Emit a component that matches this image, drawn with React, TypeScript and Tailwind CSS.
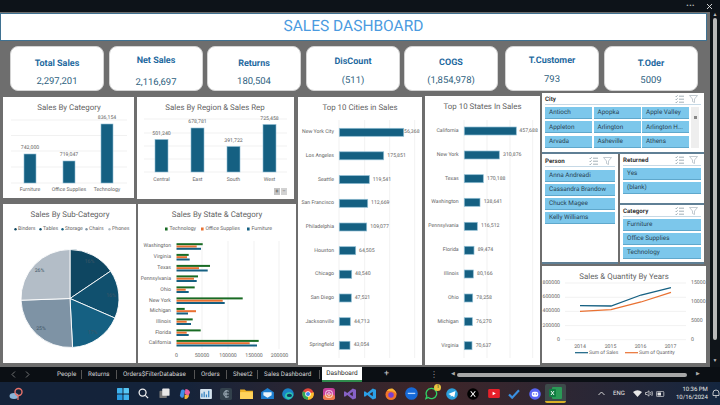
import React from "react";

const grid = "#eeeeee";
const bar = "#156082";
const barEdge = "#8fbdd3";

function Svg({ x, y, w, h, children }: { x: number; y: number; w: number; h: number; children: React.ReactNode }) {
  return (
    <svg className="block" width={w} height={h} viewBox={`${x} ${y} ${w} ${h}`}>
      {children}
    </svg>
  );
}

function T({ x, y, size = 5.2, anchor = "middle", fill = "#636363", children, weight }: { x: number; y: number; size?: number; anchor?: "start" | "middle" | "end"; fill?: string; children: React.ReactNode; weight?: number }) {
  return (
    <text x={x} y={y} fontSize={size} textAnchor={anchor} fill={fill} fontWeight={weight} dominantBaseline="central">
      {children}
    </text>
  );
}

function CategoryChart() {
  const bars = [
    { l: "Furniture", v: "742,000", x: 24, top: 154, vy: 148, lx: 30 },
    { l: "Office Supplies", v: "719,047", x: 63, top: 161, vy: 155, lx: 69 },
    { l: "Technology", v: "836,154", x: 101, top: 124, vy: 118, lx: 107 },
  ];
  return (
    <Svg x={3} y={97} w={131} h={101}>
      <T x={69} y={107} size={7.9}>Sales By Category</T>
      {[120, 135.5, 151, 167, 183].map((y) => (
        <line key={y} x1={11} x2={127} y1={y} y2={y} stroke={grid} strokeWidth={0.8} />
      ))}
      {bars.map((b) => (
        <g key={b.l}>
          <rect x={b.x} y={b.top} width={12} height={183 - b.top} fill={bar} stroke={barEdge} strokeWidth={0.6} />
          <T x={b.lx} y={b.vy}>{b.v}</T>
          <T x={b.lx} y={190}>{b.l}</T>
        </g>
      ))}
    </Svg>
  );
}

function RegionChart() {
  const bars = [
    { l: "Central", v: "501,240", x: 155, top: 139.5, vy: 133.5 },
    { l: "East", v: "678,781", x: 191, top: 128, vy: 122 },
    { l: "South", v: "391,722", x: 227, top: 146.5, vy: 140.5 },
    { l: "West", v: "725,458", x: 263, top: 124.5, vy: 118.5 },
  ];
  return (
    <Svg x={137} y={97} w={157} h={102}>
      <T x={215} y={107} size={7.9}>Sales By Region &amp; Sales Rep</T>
      {[119, 133, 146, 159, 172].map((y) => (
        <line key={y} x1={144} x2={287} y1={y} y2={y} stroke={grid} strokeWidth={0.8} />
      ))}
      {bars.map((b) => (
        <g key={b.l}>
          <rect x={b.x} y={b.top} width={13} height={172 - b.top} fill={bar} stroke={barEdge} strokeWidth={0.6} />
          <T x={b.x + 6.5} y={b.vy}>{b.v}</T>
          <T x={b.x + 6.5} y={179.5}>{b.l}</T>
        </g>
      ))}
      <rect x={274} y={188} width={6} height={7} fill="#c4c4c4" />
      <rect x={281} y={188} width={6} height={7} fill="#d2d2d2" />
      <T x={277} y={191.5} size={6} fill="#444">+</T>
      <T x={284} y={191.5} size={6} fill="#666">−</T>
    </Svg>
  );
}

function pt(cx: number, cy: number, r: number, deg: number) {
  const a = ((deg - 90) * Math.PI) / 180;
  return `${cx + r * Math.cos(a)} ${cy + r * Math.sin(a)}`;
}

function PieChart() {
  const cx = 70;
  const cy = 298.5;
  const r = 49;
  const sl = [
    { a: 0, b: 56, c: "#0e4661" },
    { a: 56, b: 113.5, c: "#10506e" },
    { a: 113.5, b: 177, c: "#156082" },
    { a: 177, b: 268, c: "#7e93a5" },
    { a: 268, b: 360, c: "#b3bdc7" },
  ];
  const legend = [
    { t: "Binders", x: 18, c: "#0e4661" },
    { t: "Tables", x: 43, c: "#10506e" },
    { t: "Storage", x: 65, c: "#156082" },
    { t: "Chairs", x: 89, c: "#7e93a5" },
    { t: "Phones", x: 112, c: "#b3bdc7" },
  ];
  const labels = [
    { t: "16%", x: 89.5, y: 262 },
    { t: "16%", x: 111, y: 296 },
    { t: "17%", x: 92.5, y: 332.5 },
    { t: "25%", x: 41, y: 328.5 },
    { t: "26%", x: 39.5, y: 271 },
  ];
  return (
    <Svg x={3} y={204} w={133} h={159}>
      <T x={70} y={214.5} size={7.9}>Sales By Sub-Category</T>
      {legend.map((l) => (
        <g key={l.t}>
          <circle cx={l.x - 2.5} cy={229.3} r={1.2} fill={l.c} />
          <T x={l.x} y={229} anchor="start">{l.t}</T>
        </g>
      ))}
      {sl.map((s) => (
        <path
          key={s.a}
          d={`M${cx} ${cy} L${pt(cx, cy, r, s.a)} A${r} ${r} 0 ${s.b - s.a > 180 ? 1 : 0} 1 ${pt(cx, cy, r, s.b)} Z`}
          fill={s.c}
          stroke="#ffffff"
          strokeWidth={0.9}
        />
      ))}
      {labels.map((l, i) => (
        <T key={i} x={l.x} y={l.y} fill="#3f5666">{l.t}</T>
      ))}
    </Svg>
  );
}

function StateChart() {
  const rows: [string, number, number, number, number][] = [
    ["Washington", 246.3, 202.7, 196.7, 201],
    ["Virginia", 257, 188.7, 187, 189.7],
    ["Texas", 268, 210, 199, 207.7],
    ["Pennsylvania", 278.5, 198, 194, 196.7],
    ["Ohio", 289.5, 194.7, 185.7, 188.7],
    ["New York", 300.5, 242.7, 222.7, 224.7],
    ["Michigan", 311, 184.7, 196, 188],
    ["Illinois", 321.5, 192.7, 186.7, 191],
    ["Florida", 332.5, 200.7, 186.7, 188.7],
    ["California", 343, 258.7, 249.7, 257],
  ];
  const x0 = 176.5;
  return (
    <Svg x={138} y={204} w={158} h={159}>
      <T x={217} y={214.5} size={7.9}>Sales By State &amp; Category</T>
      {[
        { t: "Technology", x: 165, c: "#196b24" },
        { t: "Office Supplies", x: 201, c: "#e97132" },
        { t: "Furniture", x: 247, c: "#156082" },
      ].map((l) => (
        <g key={l.t}>
          <rect x={l.x} y={227.5} width={2.6} height={3} fill={l.c} />
          <T x={l.x + 4.5} y={229} anchor="start">{l.t}</T>
        </g>
      ))}
      {[202, 228, 254, 279].map((x) => (
        <line key={x} x1={x} x2={x} y1={241} y2={349} stroke={grid} strokeWidth={0.8} />
      ))}
      {rows.map(([n, y, a, b, c]) => (
        <g key={n}>
          <T x={171} y={y} anchor="end">{n}</T>
          <rect x={x0} y={y - 3.1} width={a - x0} height={2} fill="#196b24" />
          <rect x={x0} y={y - 0.8} width={b - x0} height={2} fill="#e97132" />
          <rect x={x0} y={y + 1.5} width={c - x0} height={2} fill="#156082" />
        </g>
      ))}
      {[
        ["0", 176.5],
        ["50000", 202],
        ["100000", 228],
        ["150000", 254],
        ["200000", 279.5],
      ].map(([t, x]) => (
        <T key={t as string} x={x as number} y={355.7}>{t}</T>
      ))}
    </Svg>
  );
}

function TopChart({ x, y, w, h, title, titleX, titleY, x0, axisX, grids, labelX, rows }: { x: number; y: number; w: number; h: number; title: string; titleX: number; titleY: number; x0: number; axisX: number; grids: number[]; labelX: number; rows: [string, string, number, number, number][] }) {
  return (
    <Svg x={x} y={y} w={w} h={h}>
      <T x={titleX} y={titleY} size={7.9}>{title}</T>
      {[axisX, ...grids].map((g) => (
        <line key={g} x1={g} x2={g} y1={120} y2={358} stroke={grid} strokeWidth={0.8} />
      ))}
      {rows.map(([n, v, ry, end, vx]) => (
        <g key={n}>
          <T x={labelX} y={ry} anchor="end">{n}</T>
          <T x={vx} y={ry} anchor="start">{v}</T>
          <rect x={x0} y={ry - 4} width={end - x0} height={8} fill={bar} stroke={barEdge} strokeWidth={0.7} />
        </g>
      ))}
    </Svg>
  );
}

function LineChart() {
  return (
    <Svg x={542} y={267} w={164} h={97}>
      <T x={624} y={277} size={7.9}>Sales &amp; Quantity By Years</T>
      {[284, 298.3, 312.4, 326.6, 340.7].map((y) => (
        <line key={y} x1={565} x2={686} y1={y} y2={y} stroke={grid} strokeWidth={0.8} />
      ))}
      {[["800000", 284], ["600000", 298.3], ["400000", 312.4], ["200000", 326.6], ["0", 340.7]].map(([t, y]) => (
        <T key={t as string} x={560} y={y as number} anchor="end">{t}</T>
      ))}
      {[["15000", 284], ["10000", 302.8], ["5000", 321.7], ["0", 340.7]].map(([t, y]) => (
        <T key={t as string} x={691} y={y as number} anchor="start">{t}</T>
      ))}
      {[["2014", 580], ["2015", 610.5], ["2016", 640.5], ["2017", 670.5]].map(([t, x]) => (
        <T key={t as string} x={x as number} y={347.6}>{t}</T>
      ))}
      <polyline points="580,306.7 611,307 641,296 671,288.7" fill="none" stroke="#156082" strokeWidth={1.3} />
      <polyline points="580,312.3 611,310.7 641,303 671,293.3" fill="none" stroke="#e97132" strokeWidth={1.3} />
      <line x1={575} x2={588} y1={353.7} y2={353.7} stroke="#156082" strokeWidth={1.2} />
      <T x={589} y={353.5} anchor="start" size={5}>Sum of Sales</T>
      <line x1={625} x2={638} y1={353.7} y2={353.7} stroke="#e97132" strokeWidth={1.2} />
      <T x={639} y={353.5} anchor="start" size={5}>Sum of Quantity</T>
    </Svg>
  );
}

function SlicerIcons() {
  return (
    <div className="flex items-center gap-[5px] text-[#8a9aa5]">
      <svg width="9" height="8" viewBox="0 0 9 8" fill="none" stroke="currentColor" strokeWidth="0.8">
        <path d="M0.5 1 L1.3 1.8 L2.6 0.3 M0.5 4 L1.3 4.8 L2.6 3.3 M0.5 7 L1.3 7.8 L2.6 6.3 M4 1.2 H9 M4 4.2 H9 M4 7.2 H9" />
      </svg>
      <svg width="9" height="8" viewBox="0 0 9 8" fill="none" stroke="#b4bec5" strokeWidth="0.8">
        <path d="M0.5 0.5 H8.5 L5.5 4 V7.5 L3.5 6.5 V4 Z" />
      </svg>
    </div>
  );
}

function SlicerHeader({ title, mt }: { title: string; mt: string }) {
  return (
    <div className={`flex items-center justify-between ${mt} pr-[3px] pb-[1px] border-b border-[#c6d9e6]`}>
      <span className="text-[6.2px] leading-[8px] font-bold text-[#333333]">{title}</span>
      <SlicerIcons />
    </div>
  );
}

function SlicerBtn({ children }: { children: React.ReactNode }) {
  return (
    <div className="flex items-center h-[12px] pl-[4px] bg-[#7cc7eb] border-b border-[#5fa8cc] text-[6.4px] leading-none text-[#2a4555] whitespace-nowrap overflow-hidden">
      {children}
    </div>
  );
}

function Slicers() {
  const city = ["Antioch", "Apopka", "Apple Valley", "Appleton", "Arlington", "Arlington H...", "Arvada", "Asheville", "Athens"];
  return (
    <div className="flex flex-col w-[162px]">
      <div className="h-[61px] bg-white border-b-2 border-[#5f7f95] px-[3px]">
        <SlicerHeader title="City" mt="mt-[2px]" />
        <div className="flex mt-[2px] gap-[2px]">
          <div className="grid grid-cols-3 gap-x-[1.5px] gap-y-[2px] w-[144px]">
            {city.map((c) => (
              <SlicerBtn key={c}>{c}</SlicerBtn>
            ))}
          </div>
          <div className="w-[8px] h-[41px] bg-[#eeeeee] flex justify-center pt-[9px]">
            <div className="w-[3px] h-[3px] bg-[#888888]" />
          </div>
        </div>
      </div>
      <div className="flex h-[110px] gap-[2px]">
        <div className="w-[76px] bg-white px-[3px] border-b-2 border-[#5f7f95]">
          <SlicerHeader title="Person" mt="mt-[3px]" />
          <div className="flex flex-col gap-[2px] mt-[3px]">
            <SlicerBtn>Anna Andreadi</SlicerBtn>
            <SlicerBtn>Cassandra Brandow</SlicerBtn>
            <SlicerBtn>Chuck Magee</SlicerBtn>
            <SlicerBtn>Kelly Williams</SlicerBtn>
          </div>
        </div>
        <div className="flex flex-col w-[84px]">
          <div className="h-[51px] bg-white px-[3px] border-b-2 border-[#5f7f95]">
            <SlicerHeader title="Returned" mt="mt-[2px]" />
            <div className="flex flex-col gap-[2px] mt-[2px]">
              <SlicerBtn>Yes</SlicerBtn>
              <SlicerBtn>(blank)</SlicerBtn>
            </div>
          </div>
          <div className="h-[59px] bg-white px-[3px] border-b-2 border-[#5f7f95]">
            <SlicerHeader title="Category" mt="mt-[2px]" />
            <div className="flex flex-col gap-[2px] mt-[2px]">
              <SlicerBtn>Furniture</SlicerBtn>
              <SlicerBtn>Office Supplies</SlicerBtn>
              <SlicerBtn>Technology</SlicerBtn>
            </div>
          </div>
        </div>
      </div>
      <div className="mt-[2px] w-[164px] h-[97px] bg-white">
        <LineChart />
      </div>
    </div>
  );
}

function Card({ title, value, ml, pt, gap }: { title: string; value: string; ml: string; pt: string; gap: string }) {
  return (
    <div className={`w-[94px] h-[45px] bg-white rounded-[8px] border border-[#d4d4d4] flex flex-col items-center ${ml} ${pt}`}>
      <div className="text-[9px] leading-[12px] font-bold text-[#1f6aa0]">{title}</div>
      <div className={`text-[9.5px] leading-[12px] text-[#2e5f80] ${gap}`}>{value}</div>
    </div>
  );
}

const tileIcons: { key: string; node: React.ReactNode }[] = [
  { key: "win", node: <svg width="12" height="12" viewBox="0 0 13 13"><rect width="6" height="6" rx="0.6" fill="#3fb3ee" /><rect x="7" width="6" height="6" rx="0.6" fill="#58c7f5" /><rect y="7" width="6" height="6" rx="0.6" fill="#2a9be0" /><rect x="7" y="7" width="6" height="6" rx="0.6" fill="#3fb3ee" /></svg> },
  { key: "search", node: <svg width="11" height="11" viewBox="0 0 12 12" fill="none" stroke="#f0f0f0" strokeWidth="1.4"><circle cx="5" cy="5" r="3.8" /><path d="M8 8 L11 11" /></svg> },
  { key: "tasks", node: <svg width="11" height="11" viewBox="0 0 12 12"><rect x="0.5" y="3" width="8" height="8" rx="1" fill="#777" /><rect x="3.5" y="0.5" width="8" height="8" rx="1" fill="#e8e8e8" /></svg> },
  { key: "copilot", node: <svg width="12" height="12" viewBox="0 0 13 13"><path d="M2 3 Q4 0 6.5 3 L5 10 Q2 12 1 8 Z" fill="#3f8fe8" /><path d="M7 1 Q11 1 12 5 L10 9 L6 6 Z" fill="#e85fa0" /><path d="M6 7 L11 8 Q10 12 6 12 Z" fill="#f4b23a" /></svg> },
  { key: "chart", node: <svg width="12" height="10" viewBox="0 0 13 11"><rect width="13" height="11" rx="1" fill="#d5e3ee" /><path d="M2 9 V5 M4.5 9 V3 M7 9 V6 M9.5 9 V2" stroke="#2f7fbf" strokeWidth="1.3" /></svg> },
  { key: "e", node: <svg width="12" height="12" viewBox="0 0 13 13"><rect width="13" height="13" rx="2" fill="#33414c" /><path d="M9.5 3.5 Q5 1.5 4 6.5 Q5 11 9.5 9.5 M6.5 2.5 V10.5 M4.5 6.5 H9.5" fill="none" stroke="#b9c9d4" strokeWidth="0.9" /></svg> },
  { key: "folder", node: <svg width="13" height="11" viewBox="0 0 14 12"><path d="M0 1.5 H5 L6.5 3 H14 V12 H0 Z" fill="#f0b429" /><rect y="4.5" width="14" height="7.5" fill="#ffd35c" /></svg> },
  { key: "mail", node: <svg width="13" height="11" viewBox="0 0 14 12"><path d="M7 0 L14 4.5 V12 H0 V4.5 Z" fill="#1e7fd0" /><path d="M2.5 4.5 H11.5 V8 L7 10.5 L2.5 8 Z" fill="#e9f4fb" /></svg> },
  { key: "edge", node: <svg width="12" height="12" viewBox="0 0 13 13"><circle cx="6.5" cy="6.5" r="6.3" fill="#1a83c6" /><path d="M3 9 Q3.5 4.5 8 4.5 Q12 5 12 8 Q10 12 6.5 12.5 Q3.5 12 3 9 Z" fill="#2ec8b0" /><ellipse cx="8" cy="8" rx="2.8" ry="1.8" fill="#103c60" /></svg> },
  { key: "chrome", node: <svg width="12" height="12" viewBox="0 0 13 13"><circle cx="6.5" cy="6.5" r="6.3" fill="#e5483c" /><path d="M6.5 6.5 L1 3.5 A6.3 6.3 0 0 0 6.5 12.8 Z" fill="#34a853" /><path d="M6.5 6.5 L6.5 12.8 A6.3 6.3 0 0 0 12.5 4.5 Z" fill="#fbc02d" /><circle cx="6.5" cy="6.5" r="3" fill="#fff" /><circle cx="6.5" cy="6.5" r="2.2" fill="#3f86ee" /></svg> },
  { key: "insta", node: <svg width="12" height="12" viewBox="0 0 13 13"><rect width="13" height="13" rx="3" fill="#c53f9a" /><rect y="7" width="13" height="6" rx="3" fill="#ee7a4a" /><rect x="3" y="3" width="7" height="7" rx="2" fill="none" stroke="#fff" strokeWidth="0.9" /><circle cx="6.5" cy="6.5" r="1.5" fill="none" stroke="#fff" strokeWidth="0.8" /></svg> },
  { key: "vs", node: <svg width="12" height="12" viewBox="0 0 13 13"><path d="M9.5 0.5 L13 2 V11 L9.5 12.5 L3.5 7.5 L1 9.5 L0 9 V4 L1 3.5 L3.5 5.5 Z M9.5 4 L6 6.5 L9.5 9 Z" fill="#8661c5" fillRule="evenodd" /></svg> },
  { key: "vscode", node: <svg width="12" height="12" viewBox="0 0 13 13"><path d="M9.5 0.5 L13 2 V11 L9.5 12.5 L3.5 7.5 L1 9.5 L0 9 V4 L1 3.5 L3.5 5.5 Z M9.5 4 L6 6.5 L9.5 9 Z" fill="#2b9fe6" fillRule="evenodd" /></svg> },
  { key: "firefox", node: <svg width="12" height="12" viewBox="0 0 13 13"><circle cx="6.5" cy="7" r="6" fill="#f0732a" /><path d="M2 3 Q4 0 8 0.5 Q12 3 12.5 7 Q10 3 6 3.5 Z" fill="#f9b233" /><circle cx="6.5" cy="7.5" r="3" fill="#7a3fd0" /></svg> },
  { key: "planet", node: <svg width="13" height="13" viewBox="0 0 14 14"><circle cx="7" cy="7" r="6.8" fill="#1669d8" /><rect x="3" y="6.2" width="8" height="1.4" fill="#bcd8ff" /></svg> },
  { key: "whats", node: <div className="relative w-[13px] h-[13px]"><svg width="13" height="13" viewBox="0 0 14 14"><path d="M7 1.5 A5.5 5.5 0 1 1 3.6 11.3 L1 12.5 L2 9.8 A5.5 5.5 0 0 1 7 1.5 Z" fill="none" stroke="#2fd266" strokeWidth="1.4" /></svg><div className="absolute -top-[3px] right-[-3px] w-[7px] h-[7px] rounded-full bg-[#e9c341] text-[5px] leading-[7px] text-center text-[#222]">1</div></div> },
  { key: "tele", node: <svg width="12" height="12" viewBox="0 0 13 13"><circle cx="6.5" cy="6.5" r="6.3" fill="#2a9fdc" /><path d="M2.5 6.5 L10.3 3.2 L9 10 L6.5 8.3 L5.2 9.5 L5 7.5 Z" fill="#fff" /></svg> },
  { key: "x", node: <svg width="12" height="12" viewBox="0 0 13 13"><circle cx="6.5" cy="6.5" r="6.3" fill="#000" /><path d="M4 3.5 L9 9.5 M9 3.5 L4 9.5" stroke="#fff" strokeWidth="1.1" /></svg> },
  { key: "yt", node: <svg width="12" height="9" viewBox="0 0 13 10"><rect width="13" height="10" rx="1.5" fill="#e8202a" /><path d="M5 3 L8.5 5 L5 7 Z" fill="#fff" /></svg> },
  { key: "check", node: <svg width="12" height="10" viewBox="0 0 13 11" fill="none"><path d="M1 6 L4.5 9.5 L12 1.5" stroke="#3a8fe0" strokeWidth="2.4" /></svg> },
  { key: "discord", node: <svg width="12" height="12" viewBox="0 0 13 13"><circle cx="6.5" cy="6.5" r="6.3" fill="#5865f2" /><rect x="3" y="4" width="7" height="5.5" rx="2.3" fill="#fff" /><circle cx="5" cy="6.5" r="0.9" fill="#5865f2" /><circle cx="8" cy="6.5" r="0.9" fill="#5865f2" /></svg> },
];

function Tab({ children, w }: { children: React.ReactNode; w: string }) {
  return <div className={`${w} pl-[6px] text-[6.3px] leading-[9px] text-[#d4d4d4] whitespace-nowrap border-r border-[#555555]`}>{children}</div>;
}

const cities: [string, string, number, number, number][] = [
  ["New York City", "56,368", 132.3, 403.7, 404],
  ["Los Angeles", "175,851", 155.8, 383.7, 387.3],
  ["Seattle", "119,541", 179.6, 369.3, 372.7],
  ["San Francisco", "112,669", 203.3, 367.7, 371],
  ["Philadelphia", "109,077", 227, 366.7, 370.3],
  ["Houston", "64,505", 250.7, 355.7, 359],
  ["Chicago", "48,540", 274.3, 351.7, 355],
  ["San Diego", "47,521", 298, 351.3, 354.7],
  ["Jacksonville", "44,713", 321.7, 350.3, 354],
  ["Springfield", "43,054", 345.3, 350, 353.7],
];

const states: [string, string, number, number, number][] = [
  ["California", "457,688", 131, 516.3, 519.3],
  ["New York", "310,876", 155, 499.3, 503],
  ["Texas", "170,188", 178.7, 483.3, 487],
  ["Washington", "138,641", 202.3, 480, 483.7],
  ["Pennsylvania", "116,512", 226.3, 477.3, 481],
  ["Florida", "89,474", 250.3, 474, 477.7],
  ["Illinois", "80,166", 274, 473.3, 477],
  ["Ohio", "78,258", 298, 472.7, 476.3],
  ["Michigan", "76,270", 321.7, 472.3, 476],
  ["Virginia", "70,637", 345.7, 472, 475.7],
];

export default function App() {
  return (
    <div className="w-[720px] h-[405px] overflow-hidden flex flex-col bg-[#6e6e6e] font-['Roboto','Open_Sans',sans-serif] [text-rendering:geometricPrecision]">
      <div className="h-[12px] bg-[#0d1319] flex items-center justify-end gap-[11px] pr-[7px] text-[#e4e4e4] shrink-0">
        <span className="text-[8px] leading-[8px] font-bold tracking-[0.5px]">···</span>
        <svg width="7" height="7" viewBox="0 0 7 7" stroke="currentColor" strokeWidth="0.9"><path d="M1 1 L6 6 M6 1 L1 6" /></svg>
      </div>

      <div className="flex h-[355px] shrink-0">
        <div className="w-[710px] shrink-0">
          <div className="mt-[1px] w-[707px] h-[28px] bg-white border border-[#3f7191] flex items-center justify-center text-[15.5px] leading-none text-[#4b9be0]">
            SALES DASHBOARD
          </div>

          <div className="flex mt-[5px]">
            <Card title="Total Sales" value="2,297,201" ml="ml-[10px]" pt="pt-[11px]" gap="mt-[6px]" />
            <Card title="Net Sales" value="2,116,697" ml="ml-[5px]" pt="pt-[8px]" gap="mt-[10px]" />
            <Card title="Returns" value="180,504" ml="ml-[4px]" pt="pt-[11px]" gap="mt-[6px]" />
            <Card title="DisCount" value="(511)" ml="ml-[5px]" pt="pt-[9px]" gap="mt-[7px]" />
            <Card title="COGS" value="(1,854,978)" ml="ml-[4px]" pt="pt-[10px]" gap="mt-[6px]" />
            <Card title="T.Customer" value="793" ml="ml-[7px]" pt="pt-[8px]" gap="mt-[7px]" />
            <Card title="T.Oder" value="5009" ml="ml-[5px]" pt="pt-[11px]" gap="mt-[5px]" />
          </div>

          <div className="flex mt-[2px] items-start">
            <div className="flex flex-col ml-[3px] mt-[4px] w-[293px]">
              <div className="flex gap-[3px]">
                <div className="w-[131px] h-[101px] bg-white"><CategoryChart /></div>
                <div className="w-[157px] h-[102px] bg-white"><RegionChart /></div>
              </div>
              <div className="flex gap-[2px] mt-[5px]">
                <div className="w-[133px] h-[159px] bg-white"><PieChart /></div>
                <div className="w-[158px] h-[159px] bg-white"><StateChart /></div>
              </div>
            </div>
            <div className="ml-[2px] mt-[4px] w-[124px] h-[268px] bg-white">
              <TopChart x={298} y={97} w={124} h={268} title="Top 10 Cities in Sales" titleX={360} titleY={107.5} x0={339.3} axisX={339} grids={[364.7, 389.7, 414.7]} labelX={334} rows={cities} />
            </div>
            <div className="ml-[3px] mt-[3px] w-[115px] h-[269px] bg-white">
              <TopChart x={425} y={96} w={115} h={269} title="Top 10 States In Sales" titleX={482.5} titleY={106.5} x0={464.3} axisX={464} grids={[487, 510, 532.7]} labelX={458.7} rows={states} />
            </div>
            <div className="ml-[2px]">
              <Slicers />
            </div>
          </div>
        </div>

        <div className="w-[10px] bg-[#0f1419] flex flex-col items-center">
          <div className="mt-[1px] text-[#bdbdbd] text-[5px] leading-[5px]">▲</div>
          <div className="w-[4px] h-[322px] rounded-[2px] bg-[#b9b9b9]" />
          <div className="mt-[19px] text-[#bdbdbd] text-[5px] leading-[5px]">▼</div>
        </div>
      </div>

      <div className="h-[15px] bg-[#0b0f14] flex items-center shrink-0">
        <div className="flex items-center gap-[9px] pl-[11px] w-[51px] text-[#8a8a8a]">
          <svg width="5" height="7" viewBox="0 0 5 7" fill="none" stroke="currentColor" strokeWidth="0.8"><path d="M4 0.5 L1 3.5 L4 6.5" /></svg>
          <svg width="5" height="7" viewBox="0 0 5 7" fill="none" stroke="currentColor" strokeWidth="0.8"><path d="M1 0.5 L4 3.5 L1 6.5" /></svg>
        </div>
        <Tab w="w-[31px]">People</Tab>
        <Tab w="w-[35px]">Returns</Tab>
        <Tab w="w-[78px]">Orders$FilterDatabase</Tab>
        <Tab w="w-[32px]">Orders</Tab>
        <Tab w="w-[31px]">Sheet2</Tab>
        <Tab w="w-[62px]">Sales Dashboard</Tab>
        <div className="ml-[2px] w-[40px] h-[15px] bg-white text-[#1f1f1f] text-[6.5px] leading-[13px] text-center border-b-2 border-[#2f8a4c] whitespace-nowrap">Dashboard</div>
        <div className="ml-[22px] text-[#cccccc] text-[9px] leading-none">+</div>
        <div className="ml-[41px] text-[#aaaaaa] text-[8px] leading-none">⋮</div>
        <div className="ml-[13px] text-[#aaaaaa] text-[5px] leading-none">◀</div>
        <div className="ml-[2px] w-[230px] h-[4px] rounded-[2px] bg-[#a8a8a8]" />
        <div className="ml-[9px] text-[#aaaaaa] text-[5px] leading-none">▶</div>
      </div>

      <div className="h-[23px] shrink-0 flex items-center bg-gradient-to-r from-[#14233a] from-25% via-[#3f2528] via-60% to-[#14263f] text-[#e8e8e8]">
        <div className="w-[113px] pl-[9px]">
          <svg width="14" height="14" viewBox="0 0 14 14"><ellipse cx="5" cy="9" rx="4.5" ry="3" fill="#8ab4d8" /><circle cx="9.5" cy="5" r="3.5" fill="none" stroke="#e8736a" strokeWidth="1.4" /><path d="M9 8 V13" stroke="#e8736a" strokeWidth="1.2" /></svg>
        </div>
        {tileIcons.map((i) => (
          <div key={i.key} className="w-[20.6px] flex items-center justify-center">{i.node}</div>
        ))}
        <div className="w-[21px] h-[19px] flex items-center justify-center bg-[#3d4a4a] rounded-[2px] border-b-2 border-[#d8b028]">
          <svg width="13" height="12" viewBox="0 0 13 12"><rect x="3" width="10" height="12" rx="1" fill="#2a9a56" /><rect width="7" height="8" y="2" rx="1" fill="#107c41" /><path d="M2 4 L5 8 M5 4 L2 8" stroke="#fff" strokeWidth="0.9" /></svg>
        </div>
        <svg className="ml-[32px]" width="7" height="5" viewBox="0 0 7 5" fill="none" stroke="currentColor" strokeWidth="0.9"><path d="M0.5 4 L3.5 1 L6.5 4" /></svg>
        <span className="ml-[8px] text-[6px] leading-none">ENG</span>
        <svg className="ml-[8px]" width="9" height="7" viewBox="0 0 9 7" fill="currentColor"><path d="M0 2 Q4.5 -1.5 9 2 L4.5 7 Z" /></svg>
        <svg className="ml-[3px]" width="8" height="7" viewBox="0 0 8 7" fill="none" stroke="currentColor" strokeWidth="0.7"><path d="M0.5 2.5 H2 L4 0.8 V6.2 L2 4.5 H0.5 Z M5.5 2 Q6.5 3.5 5.5 5 M6.8 1 Q8.2 3.5 6.8 6" /></svg>
        <svg className="ml-[3px]" width="9" height="6" viewBox="0 0 9 6"><rect x="0.4" y="0.4" width="7.4" height="5.2" rx="1" fill="none" stroke="currentColor" strokeWidth="0.7" /><rect x="1.5" y="1.5" width="3.5" height="3" fill="currentColor" /></svg>
        <div className="ml-[7px] w-[36px] flex flex-col items-end text-[6px] leading-[8px] whitespace-nowrap">
          <span>10:36 PM</span>
          <span>10/16/2024</span>
        </div>
        <svg className="ml-[4px]" width="8" height="9" viewBox="0 0 8 9" fill="none" stroke="currentColor" strokeWidth="0.8"><path d="M1 6.5 V4 Q1 1 4 1 Q7 1 7 4 V6.5 Z M3 8 H5" /></svg>
      </div>
    </div>
  );
}
